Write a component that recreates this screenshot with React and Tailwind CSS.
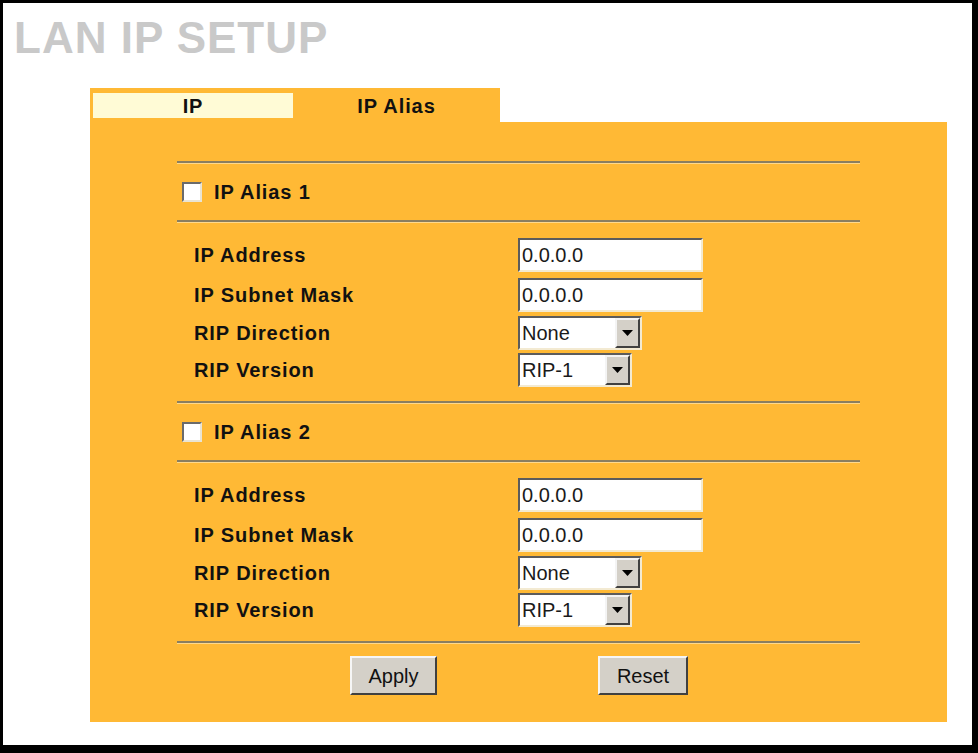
import React, { useState } from "react";

const font = { fontFamily: '"Liberation Sans", Arial, sans-serif' };

const Rule = () => (
  <div className="h-[3px] border-t-2 border-t-[#8a7e60] border-b border-b-[#ffd98c]" />
);

const TextBox = ({ value }) => (
  <div className="h-[34px] w-[185px] bg-white border-2 border-t-[#5c5c5c] border-l-[#5c5c5c] border-b-[#f3ead2] border-r-[#f3ead2] pl-[2px] flex items-center text-[20px] text-[#1a1a1a]">
    {value}
  </div>
);

const DropDown = ({ value, width }) => (
  <div
    className={`h-[34px] ${width} bg-white border-2 border-t-[#5c5c5c] border-l-[#5c5c5c] border-b-[#f3ead2] border-r-[#f3ead2] flex items-center justify-between text-[20px] text-[#1a1a1a]`}
  >
    <span className="pl-[2px]">{value}</span>
    <span className="h-full w-[25px] bg-[#d4d0c8] border-2 border-t-[#f4f4f4] border-l-[#f4f4f4] border-b-[#404040] border-r-[#404040] flex items-center justify-center">
      <svg width="11" height="6" viewBox="0 0 11 6">
        <path d="M0 0 L11 0 L5.5 6 Z" fill="#000" />
      </svg>
    </span>
  </div>
);

const Row = ({ label, children, className }) => (
  <div className={`flex items-center h-[34px] ${className}`}>
    <div className="w-[341px] pl-[17px] font-bold text-[20px] tracking-[0.9px] text-[#111]">
      {label}
    </div>
    {children}
  </div>
);

const AliasBlock = ({ n, checked, onToggle }) => (
  <>
    <div className="h-[56px] flex items-center pl-[5px]">
      <button
        onClick={onToggle}
        className="w-[20px] h-[20px] bg-white border-2 border-t-[#6b6b6b] border-l-[#6b6b6b] border-b-[#e9e4d4] border-r-[#e9e4d4] flex items-center justify-center text-[14px] leading-none"
      >
        {checked ? "✓" : ""}
      </button>
      <span className="ml-[12px] font-bold text-[20px] tracking-[0.9px] text-[#111]">
        IP Alias {n}
      </span>
    </div>
    <Rule />
    <div className="pt-[15px]">
      <Row label="IP Address" className="mb-[6px]">
        <TextBox value="0.0.0.0" />
      </Row>
      <Row label="IP Subnet Mask" className="mb-[4px]">
        <TextBox value="0.0.0.0" />
      </Row>
      <Row label="RIP Direction" className="mb-[3px]">
        <DropDown value="None" width="w-[124px]" />
      </Row>
      <Row label="RIP Version">
        <DropDown value="RIP-1" width="w-[114px]" />
      </Row>
    </div>
  </>
);

const Btn = ({ children, className }) => (
  <button
    className={`h-[39px] bg-[#d4d0c8] border-2 border-t-[#f6f6f6] border-l-[#f6f6f6] border-b-[#404040] border-r-[#404040] text-[20px] text-[#111] ${className}`}
  >
    {children}
  </button>
);

export default function App() {
  const [alias1, setAlias1] = useState(false);
  const [alias2, setAlias2] = useState(false);

  return (
    <div
      className="w-[978px] h-[753px] bg-black pt-[3px] pl-[3px] pr-[6px] pb-[8px]"
      style={font}
    >
      <div className="w-full h-full bg-white">
        <div className="pt-[13px] pl-[11px] text-[44px] leading-none font-bold text-[#c9c9c9] tracking-[1px]">
          LAN IP SETUP
        </div>

        <div className="ml-[87px] mt-[28px] w-[857px]">
          {/* tabs */}
          <div className="flex h-[34px]">
            <div className="w-[203px] bg-[#ffb935] pt-[5px] pl-[3px] pb-[4px]">
              <div className="h-full bg-[#fffbd6] flex items-center justify-center font-bold text-[20px] tracking-[0.9px] text-[#111]">
                IP
              </div>
            </div>
            <div className="w-[207px] bg-[#ffb935] pt-[5px] pb-[4px]">
              <div className="h-full flex items-center justify-center font-bold text-[20px] tracking-[0.9px] text-[#111]">
                IP Alias
              </div>
            </div>
          </div>

          {/* panel */}
          <div className="h-[600px] bg-[#ffb935] pt-[39px] pl-[87px]">
            <div className="w-[683px]">
              <Rule />
              <AliasBlock n={1} checked={alias1} onToggle={() => setAlias1(!alias1)} />
              <div className="mt-[14px]">
                <Rule />
              </div>
              <AliasBlock n={2} checked={alias2} onToggle={() => setAlias2(!alias2)} />
              <div className="mt-[14px]">
                <Rule />
              </div>
              <div className="flex pt-[12px]">
                <Btn className="ml-[173px] w-[87px]">Apply</Btn>
                <Btn className="ml-[161px] w-[90px]">Reset</Btn>
              </div>
            </div>
          </div>
        </div>
      </div>
    </div>
  );
}
